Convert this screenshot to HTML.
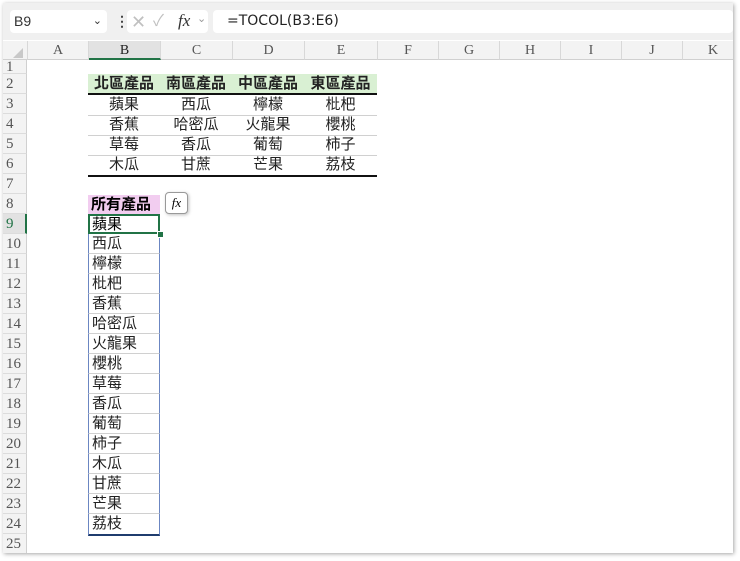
<!DOCTYPE html><html><head><meta charset="utf-8"><style>
body{margin:0;width:740px;height:561px;background:#fff;position:relative;overflow:hidden;font-family:"Liberation Sans","Noto Sans CJK TC",sans-serif}
.a{position:absolute}
.win{left:3px;top:3px;width:730px;height:550px;background:#fff;box-shadow:1px 1px 4px rgba(0,0,0,.35);overflow:hidden}
.ch{top:38px;height:18px;border-right:1px solid #d8d8d8;background:#f3f3f3;text-align:center;font:14px "Liberation Serif",serif;color:#555;line-height:19px;border-bottom:1px solid #d0d0d0}
.rh{left:0;width:24px;border-right:1px solid #d0d0d0;border-bottom:1px solid #dcdcdc;background:#f3f3f3;font:15px "Liberation Serif",serif;color:#555;padding-left:3px;box-sizing:border-box;line-height:20px}
.t{font-size:15px;color:#222;text-align:center;line-height:20px;height:20px}
.l{left:85px;width:72px;font-size:15px;color:#222;padding-left:3px;box-sizing:border-box;line-height:19px;height:20px;border-left:1px solid #6b86c2;border-right:1px solid #6b86c2;border-bottom:1px solid #d0d0d0}
</style></head><body>
<div class="a win">
<div class="a" style="left:0;top:0;width:730px;height:37px;background:#f0f0f0"></div>
<div class="a" style="left:7px;top:7px;width:97px;height:23px;background:#fff;border-radius:4px;font-size:14px;color:#333;line-height:23px;padding-left:4px;box-sizing:border-box">B9<span style="position:absolute;right:5px;top:0;font-size:11px">&#8964;</span></div>
<div class="a" style="left:112px;top:10px;font-size:14px;color:#444;font-weight:bold">⋮</div>
<div class="a" style="left:124px;top:7px;width:81px;height:23px;background:#fff;border-radius:4px"></div>
<div class="a" style="left:128px;top:9px;font-size:18px;color:#c0c0c0;line-height:20px">✕</div>
<div class="a" style="left:150px;top:9px;font-size:16px;color:#c0c0c0;line-height:20px">✓</div>
<div class="a" style="left:175px;top:8px;font:italic 17px 'Liberation Serif',serif;color:#333">fx</div>
<div class="a" style="left:194px;top:9px;font-size:11px;color:#999">&#8964;</div>
<div class="a" style="left:210px;top:7px;width:520px;height:23px;background:#fff;border-radius:4px;font:14px 'DejaVu Sans',sans-serif;color:#222;line-height:23px;padding-left:14px;box-sizing:border-box">=TOCOL(B3:E6)</div>
<div class="a ch" style="left:0;width:24px"></div>
<div class="a" style="left:10px;top:45px;width:0;height:0;border-left:10px solid transparent;border-bottom:10px solid #c8c8c8"></div>
<div class="a ch" style="left:25px;width:60px">A</div>
<div class="a ch" style="left:86px;width:71px;background:#e2e2e2;color:#222;border-bottom:2px solid #217346;height:17px">B</div>
<div class="a ch" style="left:158px;width:71px">C</div>
<div class="a ch" style="left:230px;width:71px">D</div>
<div class="a ch" style="left:302px;width:72px">E</div>
<div class="a ch" style="left:375px;width:60px">F</div>
<div class="a ch" style="left:436px;width:60px">G</div>
<div class="a ch" style="left:497px;width:60px">H</div>
<div class="a ch" style="left:558px;width:60px">I</div>
<div class="a ch" style="left:619px;width:60px">J</div>
<div class="a ch" style="left:680px;width:60px">K</div>
<div class="a rh" style="top:57px;height:14px;line-height:14px">1</div>
<div class="a rh" style="top:71px;height:20px">2</div>
<div class="a rh" style="top:91px;height:20px">3</div>
<div class="a rh" style="top:111px;height:20px">4</div>
<div class="a rh" style="top:131px;height:20px">5</div>
<div class="a rh" style="top:151px;height:20px">6</div>
<div class="a rh" style="top:171px;height:20px">7</div>
<div class="a rh" style="top:191px;height:20px">8</div>
<div class="a rh" style="top:211px;height:20px;background:#e2e2e2;color:#217346;border-right:2px solid #217346">9</div>
<div class="a rh" style="top:231px;height:20px">10</div>
<div class="a rh" style="top:251px;height:20px">11</div>
<div class="a rh" style="top:271px;height:20px">12</div>
<div class="a rh" style="top:291px;height:20px">13</div>
<div class="a rh" style="top:311px;height:20px">14</div>
<div class="a rh" style="top:331px;height:20px">15</div>
<div class="a rh" style="top:351px;height:20px">16</div>
<div class="a rh" style="top:371px;height:20px">17</div>
<div class="a rh" style="top:391px;height:20px">18</div>
<div class="a rh" style="top:411px;height:20px">19</div>
<div class="a rh" style="top:431px;height:20px">20</div>
<div class="a rh" style="top:451px;height:20px">21</div>
<div class="a rh" style="top:471px;height:20px">22</div>
<div class="a rh" style="top:491px;height:20px">23</div>
<div class="a rh" style="top:511px;height:20px">24</div>
<div class="a rh" style="top:531px;height:20px">25</div>

<div class="a" style="left:85px;top:71px;width:289px;height:19px;background:#d9f0d3"></div>
<div class="a t" style="left:85px;top:71px;width:72px;font-weight:bold">北區產品</div>
<div class="a t" style="left:157px;top:71px;width:72px;font-weight:bold">南區產品</div>
<div class="a t" style="left:229px;top:71px;width:72px;font-weight:bold">中區產品</div>
<div class="a t" style="left:301px;top:71px;width:73px;font-weight:bold">東區產品</div>
<div class="a" style="left:85px;top:90px;width:289px;height:2px;background:#111"></div>
<div class="a" style="left:85px;top:112px;width:289px;height:1px;background:#d0d0d0"></div>
<div class="a" style="left:85px;top:132px;width:289px;height:1px;background:#d0d0d0"></div>
<div class="a" style="left:85px;top:152px;width:289px;height:1px;background:#d0d0d0"></div>
<div class="a" style="left:85px;top:172px;width:289px;height:2px;background:#111"></div>
<div class="a t" style="left:85px;top:92px;width:72px">蘋果</div><div class="a t" style="left:157px;top:92px;width:72px">西瓜</div><div class="a t" style="left:229px;top:92px;width:72px">檸檬</div><div class="a t" style="left:301px;top:92px;width:73px">枇杷</div>
<div class="a t" style="left:85px;top:112px;width:72px">香蕉</div><div class="a t" style="left:157px;top:112px;width:72px">哈密瓜</div><div class="a t" style="left:229px;top:112px;width:72px">火龍果</div><div class="a t" style="left:301px;top:112px;width:73px">櫻桃</div>
<div class="a t" style="left:85px;top:132px;width:72px">草莓</div><div class="a t" style="left:157px;top:132px;width:72px">香瓜</div><div class="a t" style="left:229px;top:132px;width:72px">葡萄</div><div class="a t" style="left:301px;top:132px;width:73px">柿子</div>
<div class="a t" style="left:85px;top:152px;width:72px">木瓜</div><div class="a t" style="left:157px;top:152px;width:72px">甘蔗</div><div class="a t" style="left:229px;top:152px;width:72px">芒果</div><div class="a t" style="left:301px;top:152px;width:73px">荔枝</div>

<div class="a" style="left:85px;top:192px;width:72px;height:19px;background:#f2cdf0;font-size:15px;font-weight:bold;line-height:20px;padding-left:3px;box-sizing:border-box">所有產品</div>
<div class="a" style="left:162px;top:189px;width:21px;height:20px;border:1px solid #999;border-radius:4px;background:#fff;box-shadow:1px 1px 3px rgba(0,0,0,.25);font:italic 13px 'Liberation Serif',serif;text-align:center;line-height:20px">fx</div>
<div class="a l" style="top:231px">西瓜</div>
<div class="a l" style="top:251px">檸檬</div>
<div class="a l" style="top:271px">枇杷</div>
<div class="a l" style="top:291px">香蕉</div>
<div class="a l" style="top:311px">哈密瓜</div>
<div class="a l" style="top:331px">火龍果</div>
<div class="a l" style="top:351px">櫻桃</div>
<div class="a l" style="top:371px">草莓</div>
<div class="a l" style="top:391px">香瓜</div>
<div class="a l" style="top:411px">葡萄</div>
<div class="a l" style="top:431px">柿子</div>
<div class="a l" style="top:451px">木瓜</div>
<div class="a l" style="top:471px">甘蔗</div>
<div class="a l" style="top:491px">芒果</div>
<div class="a l" style="top:511px;border-bottom:2px solid #1f3c6e;height:22px">荔枝</div>
<div class="a" style="left:85px;top:211px;width:72px;height:20px;border:2px solid #217346;box-sizing:border-box;font-size:15px;line-height:17px;padding-left:2px">蘋果</div>
<div class="a" style="left:154px;top:228px;width:5px;height:5px;background:#217346;border:1px solid #fff"></div>
</div>
</body></html>
